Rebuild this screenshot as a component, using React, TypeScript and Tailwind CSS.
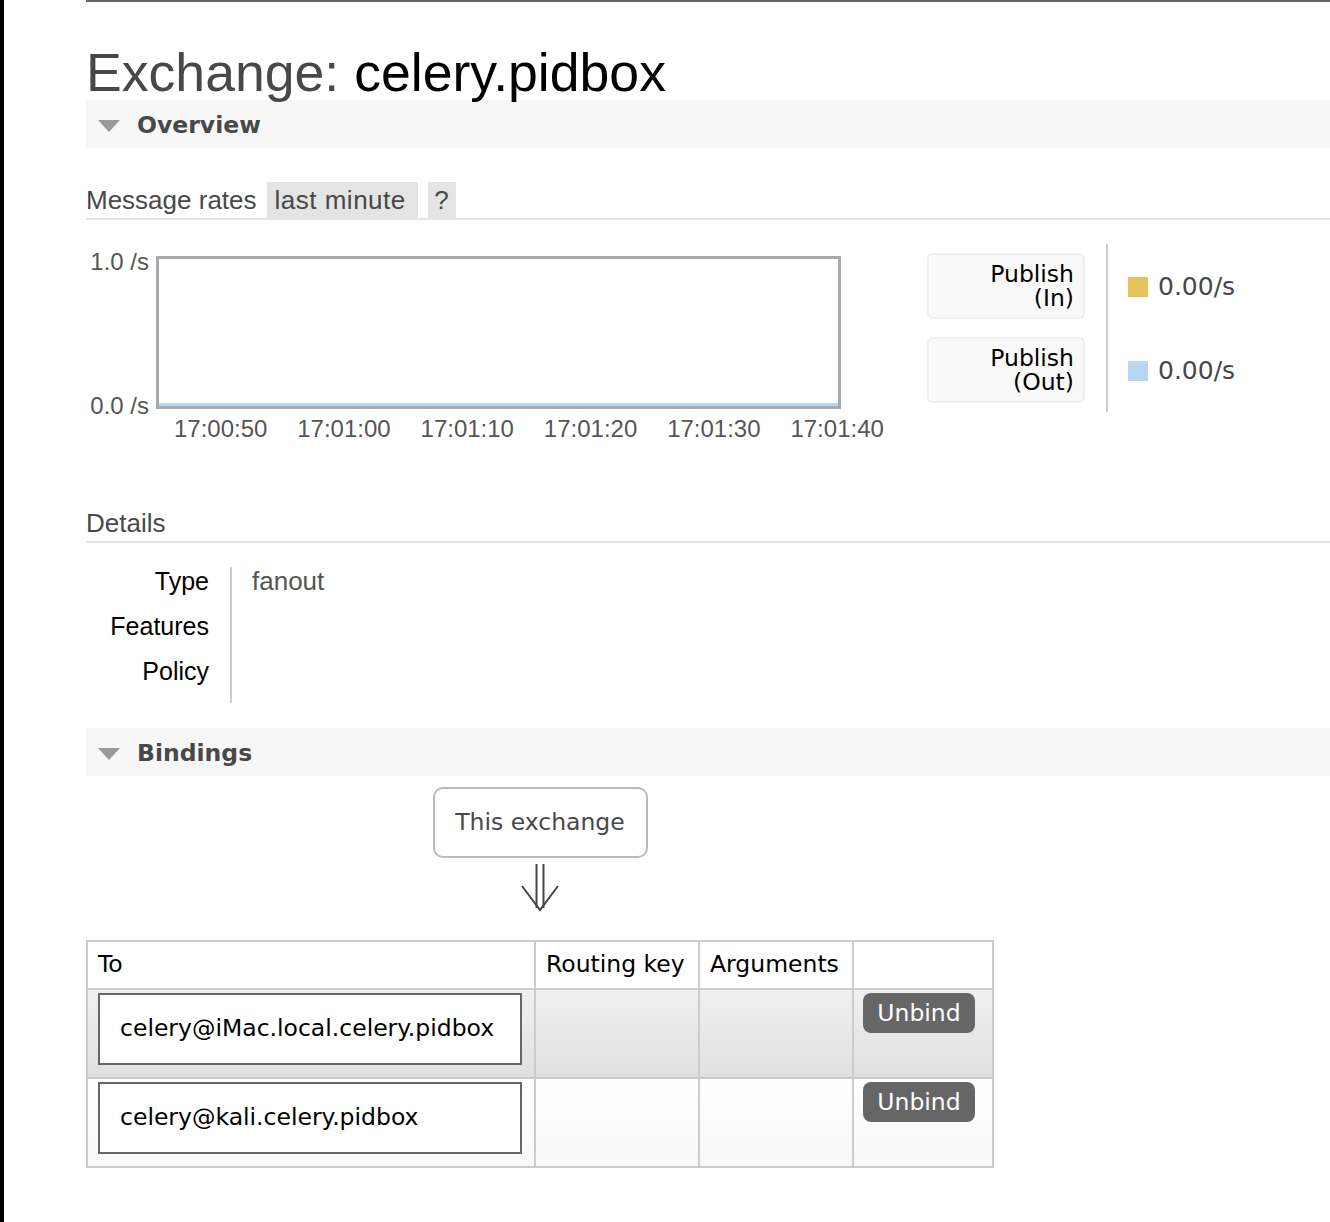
const headFont = "font-['Liberation_Sans',Arial,sans-serif]";
const bodyFont = "font-['DejaVu_Sans',Verdana,sans-serif]";

const ticks = ["17:00:50", "17:01:00", "17:01:10", "17:01:20", "17:01:30", "17:01:40"];

const legend = [
  { label: ["Publish", "(In)"], color: "bg-[#e6c25b]", value: "0.00/s" },
  { label: ["Publish", "(Out)"], color: "bg-[#b9d7f3]", value: "0.00/s" },
];

const details = [
  { label: "Type", value: "fanout" },
  { label: "Features", value: "" },
  { label: "Policy", value: "" },
];

const bindings = ["celery@iMac.local.celery.pidbox", "celery@kali.celery.pidbox"];

const SectionBar = ({ title }: { title: string }) => (
  <div className="h-[48px] bg-[#f7f7f7] flex items-center pl-[12px] pt-[4px]">
    <svg width="22" height="12" viewBox="0 0 22 12" className="mr-[17px]">
      <polygon points="0,0 22,0 11,12" fill="#999" />
    </svg>
    <span className={`${bodyFont} font-bold text-[23.5px] text-[#484848]`}>{title}</span>
  </div>
);

const SubHeading = ({ children }: { children: React.ReactNode }) => (
  <div className={`${headFont} h-[38px] border-b-2 border-[#e4e4e4] flex items-stretch text-[26px] leading-[36px] text-[#484848]`}>
    {children}
  </div>
);

export default function App() {
  return (
    <div className="w-[1330px] min-h-[1222px] flex bg-white">
      <div className="w-[4px] shrink-0 bg-black" />
      <div className="flex-1 pl-[82px]">
        <div className="h-[2px] bg-[#666]" />
        <h1 className={`${headFont} h-[98px] pt-[43px] text-[53.6px] leading-[54px] text-[#484848]`}>
          Exchange: <span className="text-black">celery.pidbox</span>
        </h1>

        <SectionBar title="Overview" />

        <div className="mt-[34px]">
          <SubHeading>
            <span>Message rates</span>
            <span className="ml-[10px] bg-[#e4e4e4] w-[151px] pl-[8px] tracking-[0.5px]">last minute</span>
            <span className="ml-[10px] bg-[#e4e4e4] w-[28px] text-center">?</span>
          </SubHeading>
        </div>

        {/* chart + legend */}
        <div className="mt-[24px] flex items-start">
          <div className="w-[755px] pt-[12px]">
            <div className="flex">
              <div className={`${headFont} w-[63px] h-[153px] flex flex-col justify-between items-end text-[24px] leading-[24px] text-[#555] -mt-[6px]`}>
                <span>1.0 /s</span>
                <span className="-mb-[15px]">0.0 /s</span>
              </div>
              <div className="ml-[7px] w-[685px] h-[153px] border-[3px] border-[#aaa] flex flex-col justify-end">
                <div className="h-[3px] bg-[#b7d6f3]" />
              </div>
            </div>
            <div className={`${headFont} flex ml-[73px] mt-[8px] text-[24px] leading-[24px] text-[#555]`}>
              {ticks.map((t) => (
                <span key={t} className="w-[123.3px] shrink-0 text-center">
                  {t}
                </span>
              ))}
            </div>
          </div>

          <div className={`${bodyFont} ml-[86px] flex py-[9px]`}>
            <div className="flex flex-col gap-[18px]">
              {legend.map((l) => (
                <div
                  key={l.label[1]}
                  className="w-[158px] h-[66px] rounded-[6px] border-2 border-[#eee] bg-[#f9f9f9] pr-[9px] flex items-center justify-end text-right text-[23.5px] leading-[24px] text-black"
                >
                  <span>
                    {l.label[0]}
                    <br />
                    {l.label[1]}
                  </span>
                </div>
              ))}
            </div>
            <div className="ml-[21px] w-[2px] bg-[#ccc] -my-[9px]" />
            <div className="ml-[20px] flex flex-col gap-[18px]">
              {legend.map((l) => (
                <div key={l.label[1]} className="h-[66px] flex items-center pt-[2px]">
                  <span className={`w-[20px] h-[20px] ${l.color}`} />
                  <span className="ml-[10px] text-[25px] text-[#484848]">{l.value}</span>
                </div>
              ))}
            </div>
          </div>
        </div>

        <div className="mt-[64px]">
          <SubHeading>
            <span>Details</span>
          </SubHeading>
        </div>

        <div className={`${headFont} mt-[24px] flex text-[25px] leading-[28px]`}>
          <div className="w-[146px] pr-[21px] border-r-2 border-[#ccc] flex flex-col gap-[17px] items-end text-black pb-[18px]">
            {details.map((d) => (
              <span key={d.label}>{d.label}</span>
            ))}
          </div>
          <div className="pl-[20px] flex flex-col gap-[17px] text-[26px] text-[#555]">
            {details.map((d) => (
              <span key={d.label} className="h-[28px]">
                {d.value}
              </span>
            ))}
          </div>
        </div>

        <div className="mt-[25px]">
          <SectionBar title="Bindings" />
        </div>

        {/* bindings */}
        <div className={`${bodyFont} w-[908px] flex flex-col items-center mt-[11px]`}>
          <div className="w-[215px] h-[71px] rounded-[10px] border-2 border-[#bbb] flex items-center justify-center text-[23.5px] text-[#484848]">
            This exchange
          </div>
          <svg width="40" height="48" viewBox="0 0 40 48" className="mt-[6px]">
            <line x1="16.5" y1="0" x2="16.5" y2="44" stroke="#444" strokeWidth="2" />
            <line x1="23.5" y1="0" x2="23.5" y2="44" stroke="#444" strokeWidth="2" />
            <polyline points="2,22 20,46 38,22" fill="none" stroke="#444" strokeWidth="2" />
          </svg>
        </div>

        <table className={`${bodyFont} mt-[28px] w-[908px] border-collapse border-2 border-[#ccc] text-[23.5px] text-black`}>
          <thead>
            <tr className="h-[48px]">
              <th className="w-[448px] border-2 border-[#ccc] text-left font-normal pl-[10px]">To</th>
              <th className="w-[164px] border-2 border-[#ccc] text-left font-normal pl-[10px]">Routing key</th>
              <th className="w-[154px] border-2 border-[#ccc] text-left font-normal pl-[10px]">Arguments</th>
              <th className="border-2 border-[#ccc]" />
            </tr>
          </thead>
          <tbody>
            {bindings.map((b, i) => (
              <tr
                key={b}
                className={`h-[89px] ${
                  i === 0
                    ? "bg-[linear-gradient(#f0f0f0,#e0e0e0)]"
                    : "bg-[linear-gradient(#ffffff,#f8f8f8)]"
                }`}
              >
                <td className="border-2 border-[#ccc] align-top pt-[3px] pl-[10px]">
                  <div className="w-[424px] h-[72px] border-2 border-[#666] bg-white flex items-center pl-[20px]">
                    {b}
                  </div>
                </td>
                <td className="border-2 border-[#ccc]" />
                <td className="border-2 border-[#ccc]" />
                <td className="border-2 border-[#ccc] align-top pt-[3px] pl-[9px]">
                  <button className="w-[112px] h-[40px] rounded-[8px] bg-[#666] text-white text-[23.5px] leading-[40px]">
                    Unbind
                  </button>
                </td>
              </tr>
            ))}
          </tbody>
        </table>
      </div>
    </div>
  );
}
